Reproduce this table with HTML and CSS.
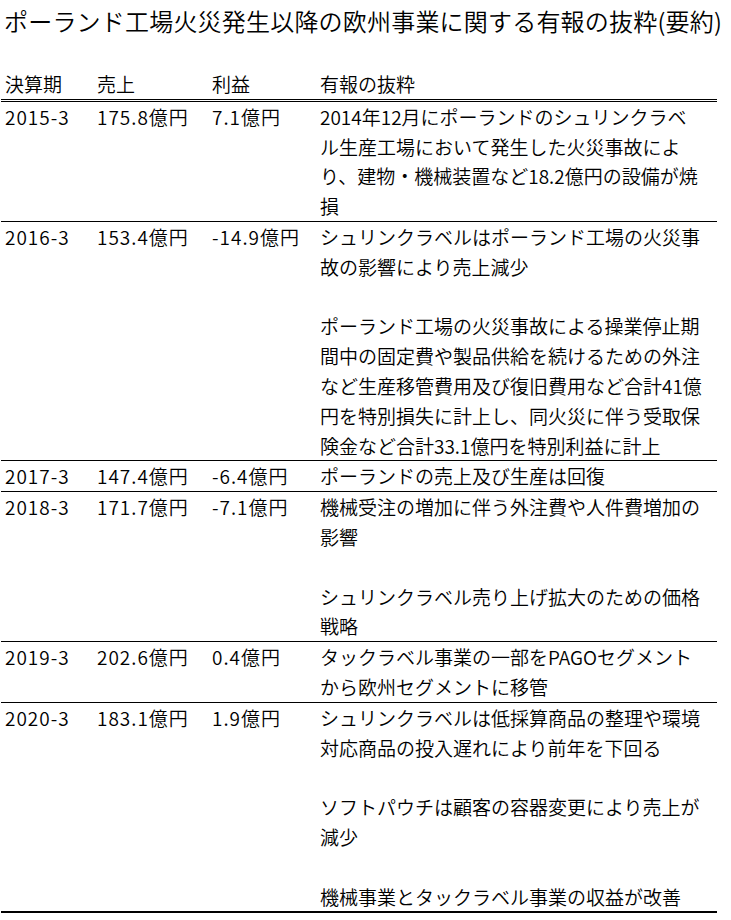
FILE: index.html
```html
<!DOCTYPE html>
<html lang="ja">
<head>
<meta charset="utf-8">
<link rel="stylesheet" href="styles.css">
</head>
<body>
<div class="page">
  <h1 class="title">ポーランド工場火災発生以降の欧州事業に関する有報の抜粋(要約)</h1>
  <table class="report">
    <colgroup>
      <col class="c-period"><col class="c-sales"><col class="c-profit"><col class="c-note">
    </colgroup>
    <thead>
      <tr><th>決算期</th><th>売上</th><th>利益</th><th>有報の抜粋</th></tr>
    </thead>
    <tbody>
      <tr>
        <td class="num">2015-3</td><td class="num">175.8億円</td><td class="num">7.1億円</td>
        <td>2014年12月にポーランドのシュリンクラベ<br>ル生産工場において発生した火災事故によ<br>り、建物・機械装置など18.2億円の設備が焼<br>損</td>
      </tr>
      <tr>
        <td class="num">2016-3</td><td class="num">153.4億円</td><td class="num">-14.9億円</td>
        <td>シュリンクラベルはポーランド工場の火災事<br>故の影響により売上減少<br><br>ポーランド工場の火災事故による操業停止期<br>間中の固定費や製品供給を続けるための外注<br>など生産移管費用及び復旧費用など合計41億<br>円を特別損失に計上し、同火災に伴う受取保<br>険金など合計33.1億円を特別利益に計上</td>
      </tr>
      <tr>
        <td class="num">2017-3</td><td class="num">147.4億円</td><td class="num">-6.4億円</td>
        <td>ポーランドの売上及び生産は回復</td>
      </tr>
      <tr>
        <td class="num">2018-3</td><td class="num">171.7億円</td><td class="num">-7.1億円</td>
        <td>機械受注の増加に伴う外注費や人件費増加の<br>影響<br><br>シュリンクラベル売り上げ拡大のための価格<br>戦略</td>
      </tr>
      <tr>
        <td class="num">2019-3</td><td class="num">202.6億円</td><td class="num">0.4億円</td>
        <td>タックラベル事業の一部をPAGOセグメント<br>から欧州セグメントに移管</td>
      </tr>
      <tr class="last">
        <td class="num">2020-3</td><td class="num">183.1億円</td><td class="num">1.9億円</td>
        <td>シュリンクラベルは低採算商品の整理や環境<br>対応商品の投入遅れにより前年を下回る<br><br>ソフトパウチは顧客の容器変更により売上が<br>減少<br><br>機械事業とタックラベル事業の収益が改善</td>
      </tr>
    </tbody>
  </table>
</div>
</body>
</html>
```

FILE: styles.css
```css
html, body {
  margin: 0;
  padding: 0;
  background: #ffffff;
}

body {
  font-family: "Noto Sans CJK JP", "Noto Sans", sans-serif;
  color: #000000;
}

.page {
  width: 731px;
  padding-top: 3px;
}

.title {
  margin: 0 0 30px 0;
  padding-left: 4px;
  font-size: 24px;
  font-weight: 350;
  line-height: 36px;
  letter-spacing: 0.2px;
  white-space: nowrap;
}

.report {
  margin-left: 1px;
  width: 716px;
  border-collapse: collapse;
  table-layout: fixed;
  font-size: 19px;
  line-height: 29.8px;
}

.c-period { width: 92px; }
.c-sales { width: 115px; }
.c-profit { width: 108px; }
.c-note { width: 401px; }

.report th,
.report td {
  padding: 0 0 0 4px;
  text-align: left;
  vertical-align: top;
  font-weight: 350;
  white-space: nowrap;
}

.report td.num {
  letter-spacing: 1px;
}

.report thead th {
  border-bottom: 3px double #000000;
}

.report tbody td {
  border-bottom: 1px solid #000000;
}

.report tbody tr.last td {
  border-bottom: 2px solid #000000;
}
```
